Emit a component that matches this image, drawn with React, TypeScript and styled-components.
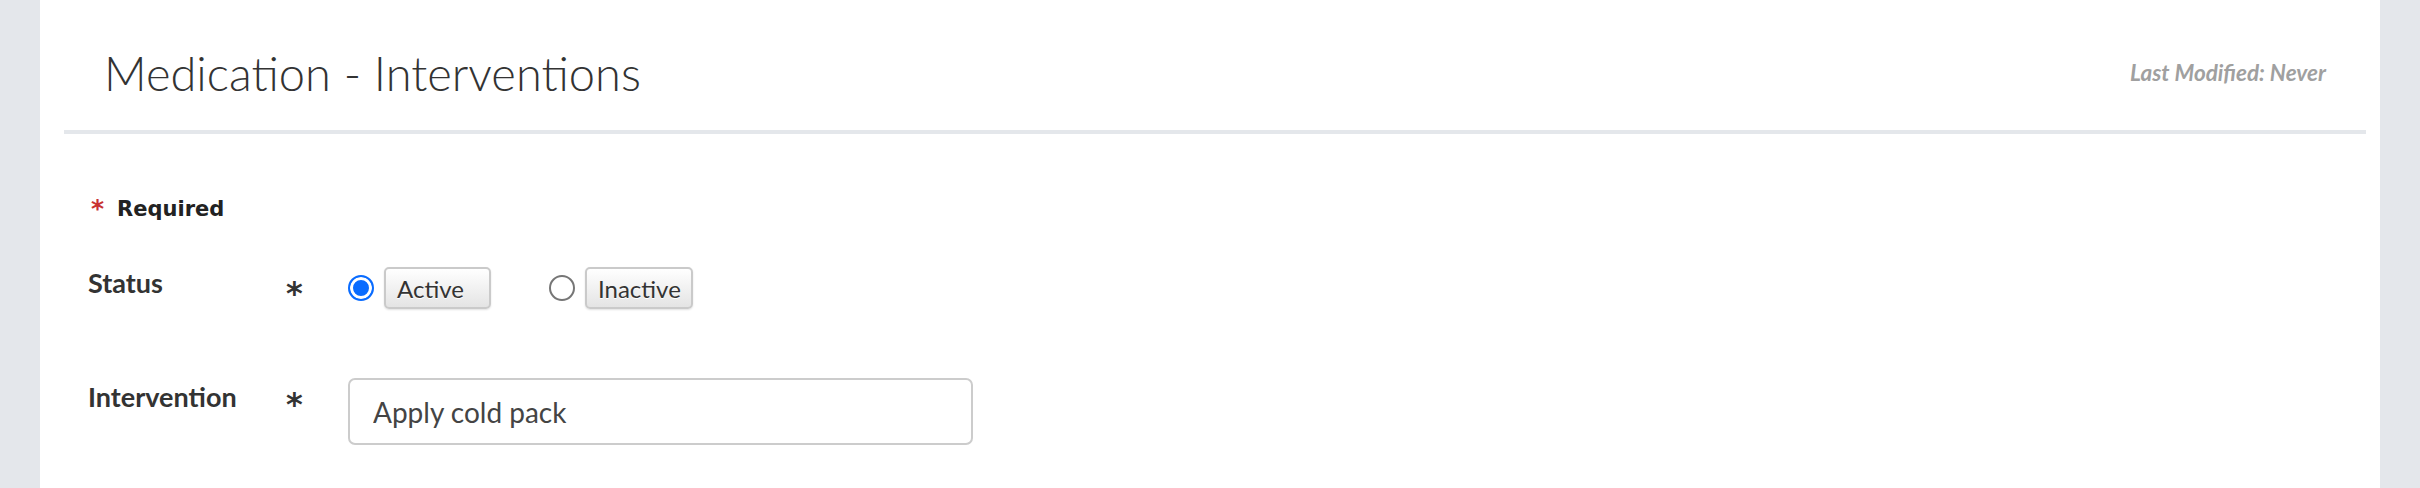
import styled, { createGlobalStyle } from "styled-components";

const COLORS = {
  frame: "#e4e7eb",
  text: "#333333",
  muted: "#a0a0a0",
  border: "#cccccc",
  blue: "#0a6cff",
  red: "#c83232",
};

const GlobalStyle = createGlobalStyle`
  html, body, #root {
    height: 100%;
  }
  body {
    margin: 0;
    background: ${COLORS.frame};
    font-family: Lato, "Open Sans", sans-serif;
    color: ${COLORS.text};
  }
`;

const Page = styled.div`
  height: 100%;
  padding: 0 40px;
  box-sizing: border-box;
`;

const Panel = styled.main`
  height: 100%;
  background: #fff;
  padding: 0 14px 0 24px;
  box-sizing: border-box;
`;

const Header = styled.header`
  display: flex;
  align-items: center;
  justify-content: space-between;
  height: 134px;
  box-sizing: border-box;
  padding: 17px 40px 0 40px;
  border-bottom: 4px solid ${COLORS.frame};
`;

const Title = styled.h1`
  margin: 0;
  font-size: 47px;
  font-weight: 300;
  line-height: 1;
  color: ${COLORS.text};
`;

const Modified = styled.span`
  font-size: 22.5px;
  font-style: italic;
  font-weight: 700;
  line-height: 1;
  color: ${COLORS.muted};
`;

const Form = styled.form`
  display: flex;
  flex-direction: column;
  gap: 69px;
  padding: 65px 24px 0;
`;

const RequiredNote = styled.div`
  display: flex;
  align-items: center;
  gap: 13px;
  margin-bottom: -21px;
  padding-left: 3px;
  font-family: "DejaVu Sans", sans-serif;
  font-size: 21px;
  font-weight: 700;
  line-height: 20px;
  color: #222;
`;

const RedStar = styled.span`
  color: ${COLORS.red};
  font-size: 25px;
`;

const Row = styled.div`
  display: grid;
  grid-template-columns: 198px 62px 1fr;
  align-items: start;
`;

const Label = styled.label<{ $offset: number }>`
  margin-top: ${(p) => p.$offset}px;
  font-size: 27px;
  font-weight: 700;
  line-height: 1;
  color: ${COLORS.text};
`;

const Star = styled.span<{ $offset: number }>`
  margin-top: ${(p) => p.$offset}px;
  font-family: "DejaVu Sans", sans-serif;
  font-size: 32px;
  font-weight: 700;
  line-height: 1;
  color: ${COLORS.text};
`;

const RadioGroup = styled.div`
  display: flex;
  align-items: center;
  gap: 58px;
`;

const Choice = styled.label`
  display: flex;
  align-items: center;
  gap: 10px;
`;

const Radio = styled.input.attrs({ type: "radio" })`
  appearance: none;
  margin: 0;
  width: 26px;
  height: 26px;
  border-radius: 50%;
  border: 2px solid #767676;
  box-sizing: border-box;
  background: #fff;

  &:checked {
    border-color: ${COLORS.blue};
    background: ${COLORS.blue};
    box-shadow: inset 0 0 0 3px #fff;
  }
`;

const ChoiceButton = styled.span`
  display: flex;
  align-items: center;
  min-width: 107px;
  height: 42px;
  padding: 0 10px 0 11px;
  box-sizing: border-box;
  border: 2px solid #cacaca;
  border-radius: 5px;
  background: linear-gradient(#ffffff, #e4e4e4);
  box-shadow: 0 1px 2px rgba(0, 0, 0, 0.12);
  font-size: 24px;
  color: ${COLORS.text};
  text-shadow: 0 1px 0 #fff;
`;

const TextInput = styled.input`
  width: 625px;
  height: 67px;
  padding: 0 23px;
  box-sizing: border-box;
  border: 2px solid ${COLORS.border};
  border-radius: 7px;
  font-family: Lato, sans-serif;
  font-size: 28px;
  color: #444;
  outline: none;
`;

const App = () => {
  return (
    <Page>
      <GlobalStyle />
      <Panel>
        <Header>
          <Title>Medication - Interventions</Title>
          <Modified>Last Modified: Never</Modified>
        </Header>
        <Form>
          <RequiredNote>
            <RedStar>*</RedStar>
            Required
          </RequiredNote>
          <Row>
            <Label $offset={2}>Status</Label>
            <Star $offset={10}>*</Star>
            <RadioGroup>
              <Choice>
                <Radio name="status" defaultChecked />
                <ChoiceButton>Active</ChoiceButton>
              </Choice>
              <Choice>
                <Radio name="status" />
                <ChoiceButton>Inactive</ChoiceButton>
              </Choice>
            </RadioGroup>
          </Row>
          <Row>
            <Label $offset={5}>Intervention</Label>
            <Star $offset={10}>*</Star>
            <TextInput defaultValue="Apply cold pack" />
          </Row>
        </Form>
      </Panel>
    </Page>
  );
};

export default App;
